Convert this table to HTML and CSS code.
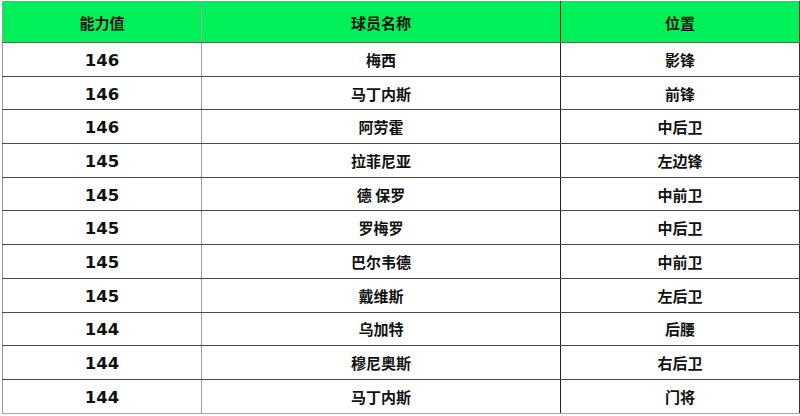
FILE: index.html
```html
<!DOCTYPE html>
<html lang="zh">
<head>
<meta charset="utf-8">
<link rel="stylesheet" href="styles.css">
</head>
<body>
<table class="tbl">
  <thead>
    <tr><th>能力值</th><th>球员名称</th><th>位置</th></tr>
  </thead>
  <tbody>
    <tr><td class="num">146</td><td>梅西</td><td>影锋</td></tr>
    <tr><td class="num">146</td><td>马丁内斯</td><td>前锋</td></tr>
    <tr><td class="num">146</td><td>阿劳霍</td><td>中后卫</td></tr>
    <tr><td class="num">145</td><td>拉菲尼亚</td><td>左边锋</td></tr>
    <tr><td class="num">145</td><td>德 保罗</td><td>中前卫</td></tr>
    <tr><td class="num">145</td><td>罗梅罗</td><td>中后卫</td></tr>
    <tr><td class="num">145</td><td>巴尔韦德</td><td>中前卫</td></tr>
    <tr><td class="num">145</td><td>戴维斯</td><td>左后卫</td></tr>
    <tr><td class="num">144</td><td>乌加特</td><td>后腰</td></tr>
    <tr><td class="num">144</td><td>穆尼奥斯</td><td>右后卫</td></tr>
    <tr class="last"><td class="num">144</td><td>马丁内斯</td><td>门将</td></tr>
  </tbody>
</table>
</body>
</html>
```
FILE: styles.css
```css
html, body {
  margin: 0;
  padding: 0;
  background: #ffffff;
}
body {
  padding: 1px 0 0 2px;
  font-family: "Noto Sans CJK SC", "Noto Sans", sans-serif;
  color: #111;
}
.tbl {
  width: 798px;
  border-collapse: collapse;
  table-layout: fixed;
}
.tbl th, .tbl td {
  text-align: center;
  font-weight: bold;
  padding: 0;
  border-top: 1px solid #4a4a4a;
  border-bottom: 1px solid #4a4a4a;
}
.tbl th {
  height: 40px;
  background: #00f05a;
  font-size: 15px;
  border-top: 1px solid #8a9a8a;
  border-bottom: 1px solid #3c7a4a;
}
.tbl td {
  height: 32.7px;
  font-size: 15px;
}
.tbl td.num {
  font-family: "DejaVu Sans", Verdana, sans-serif;
  font-size: 16.5px;
  height: 30.7px;
  padding-top: 2px;
}
.tbl tr.last td {
  border-bottom: 1px solid #a8a8a8;
}
.tbl tr > :nth-child(1) {
  width: 198px;
  border-left: 1px solid #9a9a9a;
  border-right: 1px solid #a0a0a0;
}
.tbl tr > :nth-child(2) {
  width: 358px;
  border-right: 1px solid #222;
}
.tbl tr > :nth-child(3) {
  border-right: 1px solid #333;
}
```
